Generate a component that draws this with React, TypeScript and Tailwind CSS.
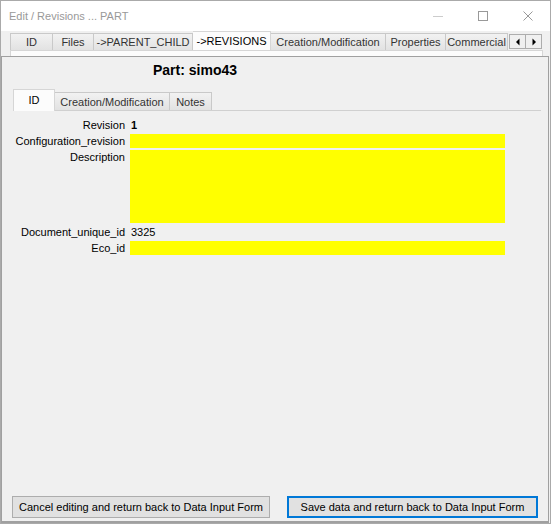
import React from "react";

type Tab = { label: string; w: string; active?: boolean };

const mainTabs: Tab[] = [
  { label: "ID", w: "w-[43px]" },
  { label: "Files", w: "w-[41px]" },
  { label: "->PARENT_CHILD", w: "w-[99px]" },
  { label: "->REVISIONS", w: "w-[78px]", active: true },
  { label: "Creation/Modification", w: "w-[115px]" },
  { label: "Properties", w: "w-[60px]" },
  { label: "Commercial", w: "w-[62px]" },
];

const innerTabs: Tab[] = [
  { label: "ID", w: "w-[42px]", active: true },
  { label: "Creation/Modification", w: "w-[115px]" },
  { label: "Notes", w: "w-[42px]" },
];

function TabButton({ tab, first, tall, short }: { tab: Tab; first: boolean; tall: string; short: string }) {
  if (tab.active) {
    return (
      <div
        className={`relative z-10 -mb-px ${tall} ${tab.w} shrink-0 flex items-center justify-center whitespace-nowrap bg-[#fcfcfc] border-t border-r border-[#d6d6d6] ${first ? "border-l" : ""} text-black`}
      >
        {tab.label}
      </div>
    );
  }
  return (
    <div
      className={`${short} ${tab.w} shrink-0 flex items-center justify-center pt-px whitespace-nowrap bg-linear-to-b from-[#f2f2f2] to-[#e2e2e2] border-t border-r border-[#c9c9c9] ${first ? "border-l" : ""} text-[#333]`}
    >
      {tab.label}
    </div>
  );
}

function FieldRow({ label, children, tall }: { label: string; children: React.ReactNode; tall?: boolean }) {
  return (
    <div className={`flex gap-[5px] ${tall ? "h-[73px]" : "h-[14px]"}`}>
      <div className="w-[123px] shrink-0 text-right leading-[14px]">{label}</div>
      {children}
    </div>
  );
}

function YellowField({ tall }: { tall?: boolean }) {
  return <div className={`w-[375px] bg-[#ffff00] ${tall ? "h-[73px]" : "h-[14px]"}`} />;
}

export default function App() {
  return (
    <div className="w-[551px] h-[524px] flex flex-col border border-[#aaaaaa] bg-[#f0f0f0] text-[11px] text-black font-['Liberation_Sans',Arial,sans-serif] overflow-hidden">
      {/* caption bar */}
      <div className="h-[30px] shrink-0 bg-white flex items-center">
        <div className="pl-[8px] text-[#999999]">Edit / Revisions ... PART</div>
        <div className="ml-auto flex h-full">
          <div className="w-[45px] flex items-center justify-center">
            <svg width="10" height="10" viewBox="0 0 10 10">
              <line x1="0" y1="5.5" x2="10" y2="5.5" stroke="#cccccc" strokeWidth="1" />
            </svg>
          </div>
          <div className="w-[45px] flex items-center justify-center">
            <svg width="10" height="10" viewBox="0 0 10 10">
              <rect x="0.5" y="0.5" width="9" height="9" fill="none" stroke="#999999" strokeWidth="1" />
            </svg>
          </div>
          <div className="w-[45px] flex items-center justify-center">
            <svg width="10" height="10" viewBox="0 0 10 10">
              <path d="M0.5 0.5 L9.5 9.5 M9.5 0.5 L0.5 9.5" stroke="#999999" strokeWidth="1" />
            </svg>
          </div>
        </div>
      </div>

      {/* main tab strip */}
      <div className="h-[25px] shrink-0 flex flex-col">
        <div className="h-[19px] flex items-end pl-[9px]">
          <div className="w-[499px] h-full flex items-end overflow-hidden">
            {mainTabs.map((t, i) => (
              <TabButton key={t.label} tab={t} first={i === 0} tall="h-[20px]" short="h-[17px]" />
            ))}
          </div>
          <div className="mb-px h-[15px] w-[33px] flex border border-[#adadad] bg-[#f0f0f0]">
            <div className="w-[16px] border-r border-[#adadad] flex items-center justify-center">
              <svg width="8" height="8" viewBox="0 0 8 8">
                <polygon points="5.5,0.5 5.5,7.5 2,4" fill="#000" />
              </svg>
            </div>
            <div className="flex-1 flex items-center justify-center">
              <svg width="8" height="8" viewBox="0 0 8 8">
                <polygon points="2.5,0.5 2.5,7.5 6,4" fill="#000" />
              </svg>
            </div>
          </div>
        </div>
        <div className="ml-[9px] w-[533px] flex-1 border-t border-l border-r border-[#d6d6d6] bg-[#fcfcfc]" />
      </div>

      {/* content */}
      <div className="flex-1 mr-px flex flex-col border-t border-l border-r border-b-2 border-[#a0a0a0]">
        <div className="mt-[5px] h-[16px] leading-[16px] pl-[151px] text-[14px] font-bold">Part: simo43</div>

        <div className="mt-[11px] ml-[11px] flex flex-col">
          <div className="h-[21px] flex items-end">
            {innerTabs.map((t, i) => (
              <TabButton key={t.label} tab={t} first={i === 0} tall="h-[22px]" short="h-[18px]" />
            ))}
          </div>
          <div className="w-[528px] h-px bg-[#d0d0d0]" />
        </div>

        <div className="mt-[7px] flex flex-col gap-[2px]">
          <FieldRow label="Revision">
            <div className="leading-[14px] font-bold pl-[1px]">1</div>
          </FieldRow>
          <FieldRow label="Configuration_revision">
            <YellowField />
          </FieldRow>
          <FieldRow label="Description" tall>
            <YellowField tall />
          </FieldRow>
          <FieldRow label="Document_unique_id">
            <div className="leading-[14px] pl-[1px]">3325</div>
          </FieldRow>
          <FieldRow label="Eco_id">
            <YellowField />
          </FieldRow>
        </div>

        <div className="flex-1" />

        <div className="flex gap-[17px] pl-[10px] pb-[3px]">
          <button className="h-[22px] w-[258px] border border-[#adadad] bg-[#e1e1e1] text-black">
            Cancel editing and return back to Data Input Form
          </button>
          <button className="h-[22px] w-[251px] border-2 border-[#0078d7] bg-[#e1e1e1] text-black">
            Save data and return back to Data Input Form
          </button>
        </div>
      </div>
    </div>
  );
}
